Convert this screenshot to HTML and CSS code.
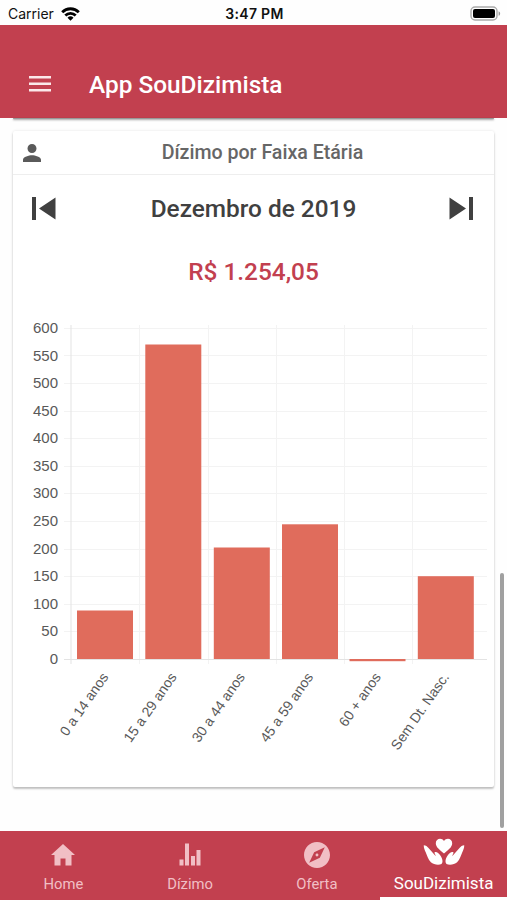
FILE: index.html
```html
<!DOCTYPE html>
<html lang="pt-BR">
<head>
  <meta charset="UTF-8">
  <meta name="viewport" content="width=device-width, initial-scale=1.0">
  <title>App SouDizimista</title>
  <link rel="stylesheet" href="styles.css">
</head>
<body>
  <div class="status-bar">
    <div class="carrier">
      <span>Carrier</span>
      <svg class="wifi" width="19" height="14" viewBox="0 0 19 14" fill="none" stroke="#000" stroke-width="2.8">
        <path d="M1.2 5.2a11.7 11.7 0 0 1 16.6 0"/>
        <path d="M4.3 8.5a7.3 7.3 0 0 1 10.4 0"/>
        <path d="M9.5 13.8l-3-3.1a4.3 4.3 0 0 1 6 0z" fill="#000" stroke="none"/>
      </svg>
    </div>
    <div class="clock">3:47 PM</div>
    <svg class="battery" width="31" height="15" viewBox="0 0 31 15">
      <rect x="1" y="1" width="26" height="13" rx="4" fill="#fff" stroke="#aaa" stroke-width="1.4"/>
      <rect x="3" y="3" width="22" height="9" rx="2" fill="#000"/>
      <path d="M28.6 5.2c2 .8 2 3.8 0 4.6z" fill="#999"/>
    </svg>
  </div>

  <header class="header">
    <svg width="22" height="16" viewBox="0 0 22 16" fill="#fbe8ea">
      <path d="M0 0h22v2.500H0zM0 6.500h22V9H0zM0 13h22v2.500H0z"/>
    </svg>
    <h1>App SouDizimista</h1>
  </header>

  <main class="content">
    <div class="card card-previous"></div>
    <section class="card">
      <div class="card-header">
        <svg class="person" width="18" height="18" viewBox="4 4 16 16" fill="#5a5a5a">
          <path d="M12 12c2.210 0 4-1.790 4-4s-1.790-4-4-4-4 1.790-4 4 1.790 4 4 4zm0 2c-2.670 0-8 1.340-8 4v2h16v-2c0-2.660-5.330-4-8-4z"/>
        </svg>
        <h2>Dízimo por Faixa Etária</h2>
      </div>
      <div class="month">
        <svg width="24" height="23" viewBox="0 0 24 23" fill="#404040">
          <path d="M0 0h4v23H0zM23.500 .5v22L7 11.500z"/>
        </svg>
        <h3>Dezembro de 2019</h3>
        <svg width="24" height="23" viewBox="0 0 24 23" fill="#404040">
          <path d="M20 0h4v23h-4zM.5 .5v22L17 11.500z"/>
        </svg>
      </div>
      <p class="total">R$ 1.254,05</p>

      <svg class="chart" width="481" height="460" viewBox="13 310 481 460">
        <!-- linhas de grade -->
        <path class="grid" d="M64 328.500H487M64 355.500H487M64 383.500H487M64 411.500H487M64 438.500H487M64 466.500H487M64 493.500H487M64 521.500H487M64 549.500H487M64 576.500H487M64 604.500H487M64 631.500H487M139.500 325V664M208.500 325V664M276.500 325V664M344.500 325V664M412.500 325V664"/>
        <path class="axis" d="M71 325V664M64 659.500H487"/>
        <!-- barras -->
        <g class="bars">
          <rect x="77" y="610.500" width="56" height="48.500"/>
          <rect x="145.300" y="344.500" width="56" height="314.500"/>
          <rect x="213.800" y="547.500" width="56" height="111.500"/>
          <rect x="282" y="524.300" width="56" height="134.700"/>
          <rect x="349.500" y="659" width="56" height="2.200"/>
          <rect x="417.800" y="576.200" width="56" height="82.800"/>
        </g>
        <g class="y-labels">
          <text x="58" y="333">600</text>
          <text x="58" y="360.500">550</text>
          <text x="58" y="388">500</text>
          <text x="58" y="415.500">450</text>
          <text x="58" y="443">400</text>
          <text x="58" y="470.500">350</text>
          <text x="58" y="498">300</text>
          <text x="58" y="526">250</text>
          <text x="58" y="553.500">200</text>
          <text x="58" y="581">150</text>
          <text x="58" y="608.500">100</text>
          <text x="58" y="636">50</text>
          <text x="58" y="664">0</text>
        </g>
        <g class="x-labels">
          <text transform="translate(109 677) rotate(-55)">0 a 14 anos</text>
          <text transform="translate(177.300 677) rotate(-55)">15 a 29 anos</text>
          <text transform="translate(245.500 677) rotate(-55)">30 a 44 anos</text>
          <text transform="translate(313.800 677) rotate(-55)">45 a 59 anos</text>
          <text transform="translate(381.500 677) rotate(-55)">60 + anos</text>
          <text transform="translate(449.800 677) rotate(-55)">Sem Dt. Nasc.</text>
        </g>
      </svg>
    </section>
    <div class="scrollbar"></div>
  </main>

  <nav class="tabs">
    <div class="tab">
      <svg width="24" height="26" viewBox="0 0 24 26" fill="currentColor">
        <path d="M12 2L0 13h3.500v10.500h6v-7h5v7h6V13H24z"/>
      </svg>
      <span>Home</span>
    </div>
    <div class="tab">
      <svg width="22" height="26" viewBox="0 0 22 26" fill="currentColor">
        <path d="M.5 17.500h4v6h-4zM6 1.500h4v22H6zM12 14h4v9.500h-4zM17.500 8h4v15.500h-4z"/>
      </svg>
      <span>Dízimo</span>
    </div>
    <div class="tab">
      <svg width="26" height="26" viewBox="2 2 20 20" fill="currentColor">
        <path d="M12 10.900c-.61 0-1.100.49-1.100 1.100s.49 1.100 1.100 1.100c.61 0 1.100-.49 1.100-1.100s-.49-1.100-1.100-1.100zM12 2C6.480 2 2 6.480 2 12s4.480 10 10 10 10-4.480 10-10S17.520 2 12 2zm2.190 12.190L6 18l3.810-8.190L18 6l-3.810 8.190z"/>
      </svg>
      <span>Oferta</span>
    </div>
    <div class="tab active">
      <svg width="42" height="27" viewBox="0 0 42 27" fill="currentColor">
        <path d="M21 15.500C17 12 12.800 9.300 12.800 5.200c0-5 6-6 8.200-2.200 2.200-3.800 8.200-2.800 8.200 2.200 0 4.100-4.200 6.800-8.200 10.300z"/>
        <path id="hand" d="M.8 7.200c2 0 3.400 1.300 4.700 2.800l4.900 5.600 2.200 2.400c.3-1.500-2-3.300-.6-4 1.800-.6 3.700 1.200 5.200 3.300 2.200 3.200 3.200 6.600 1.300 8.600-2.700 1.600-8 .7-10.600-1.600C5 21.500 4.300 17.800 2.700 14.200 1.700 12 .6 9.500.8 7.200z"/>
        <use href="#hand" transform="translate(42 0) scale(-1 1)"/>
      </svg>
      <span>SouDizimista</span>
    </div>
  </nav>
</body>
</html>
```
FILE: styles.css
```css
* {
  box-sizing: border-box;
}
body {
  margin: 0;
  height: 900px;
  display: flex;
  flex-direction: column;
  overflow: hidden;
  background-color: #fefefe;
  font-family: Roboto, sans-serif;
}
h1, h2, h3, p {
  margin: 0;
  font-weight: 500;
}
svg {
  display: block;
}

/* Barra de status */
.status-bar {
  height: 25px;
  display: grid;
  grid-template-columns: 1fr auto 1fr;
  align-items: center;
  padding: 2px 6px 0 8px;
  font-family: Inter, sans-serif;
  font-size: 14px;
  color: #111;
}
.carrier {
  display: flex;
  align-items: center;
  gap: 7px;
}
.clock {
  font-weight: 600;
  font-size: 14px;
  letter-spacing: 0.3px;
}
.battery {
  justify-self: end;
}

.header {
  height: 93px;
  flex-shrink: 0;
  display: flex;
  align-items: center;
  gap: 38px;
  padding: 25px 29px 0;
  background-color: #c2404f;
  color: #fff;
}
.header h1 {
  font-size: 24.400px;
}

/* Conteúdo */
.content {
  position: relative;
  flex: 1;
  min-height: 0;
  padding: 0 13px;
}
.card {
  height: 656px;
  border-radius: 2px;
  background-color: #fff;
  box-shadow: 0 2px 2px rgba(0, 0, 0, 0.22), 0 0 3px rgba(0, 0, 0, 0.1);
}
.card-previous {
  height: 1px;
  margin-bottom: 12px;
  background-color: #999;
  box-shadow: 0 1px 2px rgba(0, 0, 0, 0.5);
}
.card-header {
  height: 44px;
  display: grid;
  grid-template-columns: 28px 1fr 10px;
  align-items: center;
  padding: 0 10px;
  border-bottom: 1px solid #eee;
}
.card-header h2 {
  font-size: 19.600px;
  text-align: center;
  color: #666;
}
.month {
  height: 67px;
  display: flex;
  align-items: center;
  justify-content: space-between;
  padding: 0 21px 0 19px;
}
.month h3 {
  padding-left: 2px;
  font-size: 24.400px;
  color: #404040;
}
.total {
  height: 68px;
  line-height: 60px;
  font-size: 24.400px;
  text-align: center;
  color: #c2404f;
}
.scrollbar {
  position: absolute;
  top: 455px;
  right: 3px;
  width: 4px;
  height: 255px;
  border-radius: 2px;
  background-color: #a0a0a0;
}

/* Gráfico */
.chart {
  font-family: "Liberation Sans", Arial, sans-serif;
  font-size: 14px;
  fill: #595959;
}
.grid, .axis {
  fill: none;
  stroke: #f3f3f3;
}
.axis {
  stroke: #e3e3e3;
}
.bars {
  fill: #e06c5c;
}
.y-labels {
  font-size: 15px;
  text-anchor: end;
}
.x-labels {
  text-anchor: end;
}

/* Abas */
.tabs {
  height: 69px;
  flex-shrink: 0;
  display: grid;
  grid-template-columns: repeat(4, 1fr);
  background-color: #c2404f;
}
.tab {
  display: flex;
  flex-direction: column;
  align-items: center;
  gap: 7px;
  padding-top: 11px;
  font-size: 14.800px;
  line-height: 18px;
  color: #f1bfc5;
}
.tab.active {
  gap: 9px;
  padding-top: 7px;
  border-bottom: 3px solid #fff;
  font-size: 17px;
  color: #fff;
}
```
